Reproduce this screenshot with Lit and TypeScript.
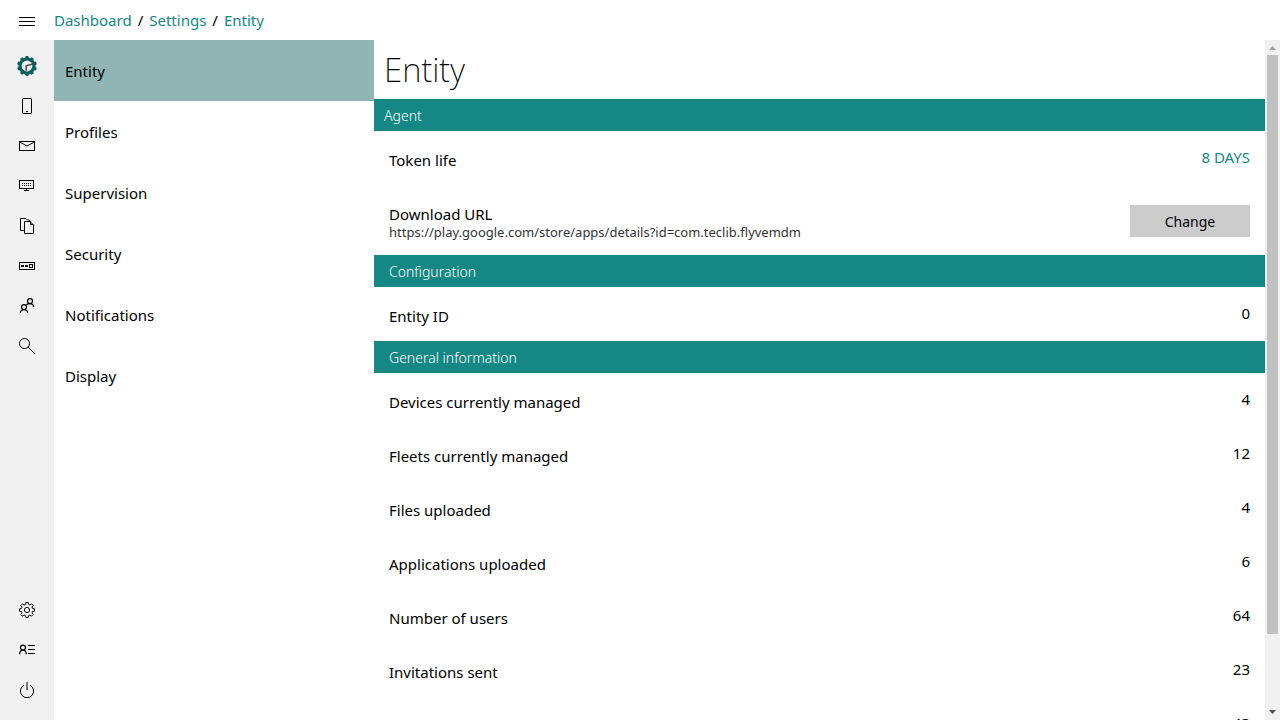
import { LitElement, html, svg, css } from "lit";
import { customElement, state } from "lit/decorators.js";

/** Outline of a cog with rounded teeth, centred on (c, c). */
function cog(c: number, teeth: number, outer: number, inner: number): string {
  const pts: string[] = [];
  const step = (Math.PI * 2) / teeth;
  for (let i = 0; i < teeth; i++) {
    const a = i * step - Math.PI / 2;
    for (const [off, r] of [[-0.32, inner], [-0.2, outer], [0.2, outer], [0.32, inner]]) {
      const t = a + off * step;
      pts.push(`${(c + r * Math.cos(t)).toFixed(2)} ${(c + r * Math.sin(t)).toFixed(2)}`);
    }
  }
  return `M${pts.join("L")}Z`;
}

const icons = {
  menu: svg`<path d="M0 4.5H16M0 8.5H16M0 12.5H16"/>`,
  phone: svg`<rect x="3.5" y=".5" width="9" height="15" rx=".5"/><path d="M7 13.5H9"/>`,
  mail: svg`<rect x=".5" y="3.5" width="15" height="9"/><path d="M1 4.2L8 8L15 4.2"/>`,
  fleet: svg`<rect x=".5" y="2.5" width="14" height="8"/><path d="M7.5 11V12M5 12.5H10"/><path stroke-dasharray="1 1" d="M3 5.5H12M3 7.5H12"/>`,
  files: svg`<path d="M5 12.5H1.5V.5H7L9 2.5"/><path d="M5.5 3.5H11L14.5 7V15.5H5.5ZM11.5 3.5V6.5H14.5M9 1.5L12 4"/>`,
  apps: svg`<rect x=".5" y="4.5" width="15" height="7"/><rect x="10.5" y="6.5" width="3" height="3"/><path stroke-width="2" d="M2 8H5M6 8H9"/>`,
  users: svg`<g stroke-width="1.25"><circle cx="11" cy="3" r="2.5"/><circle cx="5" cy="9" r="2.5"/><path d="M1.3 15C1.5 12.8 3 11.6 5 11.6S8.500 12.8 8.700 15M7.400 6.700C8.200 5.900 9.600 5.600 11 5.600C13 5.600 14.400 6.800 14.700 9"/></g>`,
  search: svg`<circle cx="5.5" cy="5.5" r="5"/><path d="M9.2 9.2L15.6 15.6"/>`,
  gear: svg`<path d=${cog(8, 8, 7.6, 5.8)}/><circle cx="8" cy="8" r="2.6"/>`,
  profile: svg`<g stroke-width="1.25"><circle cx="4" cy="5.5" r="2.5"/><path d="M.6 12.2C.8 9.6 2 8.1 4 8.1S7.2 9.600 7.400 12.200"/></g><path d="M9 3.500H16M9 7.500H16M9 11.500H16"/>`,
  power: svg`<path d="M4.8 3.3A6.6 6.6 0 1 0 11.2 3.3"/><path d="M8 0V8"/>`,
};

const icon = (name: keyof typeof icons) =>
  html`<svg class="icon" viewBox="0 0 16 16" aria-hidden="true">${icons[name]}</svg>`;

const logo = html`<svg class="logo" viewBox="0 0 20 20" aria-hidden="true">
  <path d=${cog(10, 10, 10, 8.6)} fill="#08605e" />
  <circle cx="10" cy="10" r="5.4" fill="#f1f1f1" />
  <path d="M9.2 14.8V9.8L18.5 7.3" fill="none" stroke="#4a4a4a" stroke-width="1.5" />
</svg>`;

type IconName = keyof typeof icons;

const primary: [IconName, string][] = [
  ["phone", "Devices"],
  ["mail", "Invitations"],
  ["fleet", "Fleets"],
  ["files", "Files"],
  ["apps", "Applications"],
  ["users", "Users"],
  ["search", "Search"],
];

const secondary: [IconName, string][] = [
  ["gear", "Settings"],
  ["profile", "Profile"],
  ["power", "Log out"],
];

const categories = ["Entity", "Profiles", "Supervision", "Security", "Notifications", "Display"];

const totals: [string, number][] = [
  ["Devices currently managed", 4],
  ["Fleets currently managed", 12],
  ["Files uploaded", 4],
  ["Applications uploaded", 6],
  ["Number of users", 64],
  ["Invitations sent", 23],
  ["Number of invitations", 43],
];

@customElement("app-root")
export class AppRoot extends LitElement {
  @state() private selected = "Entity";

  static styles = css`
    :host {
      display: grid;
      grid-template: 40px minmax(0, 1fr) / 54px 320px minmax(0, 1fr);
      height: 100vh;
      overflow: hidden;
      background: #fff;
      color: #000;
      font: 15px/20px "Noto Sans", sans-serif;
    }
    * { box-sizing: border-box; }
    a { color: #158784; text-decoration: none; }
    button { border: 0; padding: 0; font: inherit; color: inherit; cursor: pointer; }
    .icon { width: 16px; height: 16px; fill: none; stroke: #000; stroke-width: 1; }
    .logo { width: 20px; height: 20px; }
    .menu { display: grid; place-items: center; padding-top: 2px; background: none; }
    .crumbs { grid-column: 2 / -1; display: flex; align-items: center; gap: 6px; }
    .rail { display: flex; flex-direction: column; padding: 6px 0 10px; background: #f1f1f1; }
    .rail a { display: grid; place-items: center; height: 40px; }
    .spacer { flex: 1; }
    .categories { overflow: auto; }
    .category { display: block; width: 100%; height: 61px; padding: 0 11px; text-align: left; background: none; }
    .category.on { background: #91b5b5; }
    .pane { display: grid; grid-template-columns: minmax(0, 1fr) 15px; min-height: 0; }
    .content { overflow: auto; scrollbar-width: none; }
    h1 { margin: 0; padding: 8px 10px 7px; font-size: 33px; line-height: 44px; font-weight: 200; }
    h2 { margin: 0; padding: 2px 15px 0; height: 32px; font-size: 14px; line-height: 30px; font-weight: 300; background: #158784; color: #fff; }
    h2.lead { padding-left: 10px; }
    .row { display: flex; justify-content: space-between; height: 54px; padding: 16px 15px 0; }
    .row.tall { height: 70px; padding-top: 20px; }
    .label { padding-top: 3px; }
    .tall .label { padding: 0; line-height: 18px; }
    .url { font-size: 13px; color: #333; }
    .change { width: 120px; height: 32px; padding-top: 2px; font-size: 14px; background: #ccc; }
    .scroll { display: grid; grid-template-rows: 15px 1fr 15px; background: #f1f1f1; }
    .scroll svg { width: 15px; height: 15px; }
    .thumb { margin: 0 2px; height: 89%; background: #c1c1c1; }
  `;

  private row(label: string, value: unknown) {
    return html`<div class="row"><span class="label">${label}</span><span>${value}</span></div>`;
  }

  private railLink([name, label]: [IconName, string]) {
    return html`<a href="#" aria-label=${label}>${icon(name)}</a>`;
  }

  render() {
    return html`
      <button class="menu" aria-label="Menu">${icon("menu")}</button>
      <nav class="crumbs" aria-label="Breadcrumb">
        <a href="#">Dashboard</a><span>/</span><a href="#">Settings</a><span>/</span><a href="#">Entity</a>
      </nav>
      <nav class="rail" aria-label="Main">
        <a href="#" aria-label="Dashboard">${logo}</a>
        ${primary.map((i) => this.railLink(i))}
        <div class="spacer"></div>
        ${secondary.map((i) => this.railLink(i))}
      </nav>
      <div class="categories">
        ${categories.map(
          (c) => html`<button
            class="category ${c === this.selected ? "on" : ""}"
            @click=${() => (this.selected = c)}
          >${c}</button>`
        )}
      </div>
      <div class="pane">
        <main class="content">
          <h1>Entity</h1>
          <h2 class="lead">Agent</h2>
          ${this.row("Token life", html`<a href="#">8 DAYS</a>`)}
          <div class="row tall">
            <div class="label">
              <div>Download URL</div>
              <div class="url">https://play.google.com/store/apps/details?id=com.teclib.flyvemdm</div>
            </div>
            <button class="change">Change</button>
          </div>
          <h2>Configuration</h2>
          ${this.row("Entity ID", 0)}
          <h2>General information</h2>
          ${totals.map(([l, v]) => this.row(l, v))}
        </main>
        <div class="scroll" aria-hidden="true">
          <svg viewBox="0 0 15 15"><path d="M4 10L7.5 6L11 10Z" fill="#a3a3a3" /></svg>
          <div class="thumb"></div>
          <svg viewBox="0 0 15 15"><path d="M4 5L7.5 9L11 5Z" fill="#505050" /></svg>
        </div>
      </div>
    `;
  }
}
